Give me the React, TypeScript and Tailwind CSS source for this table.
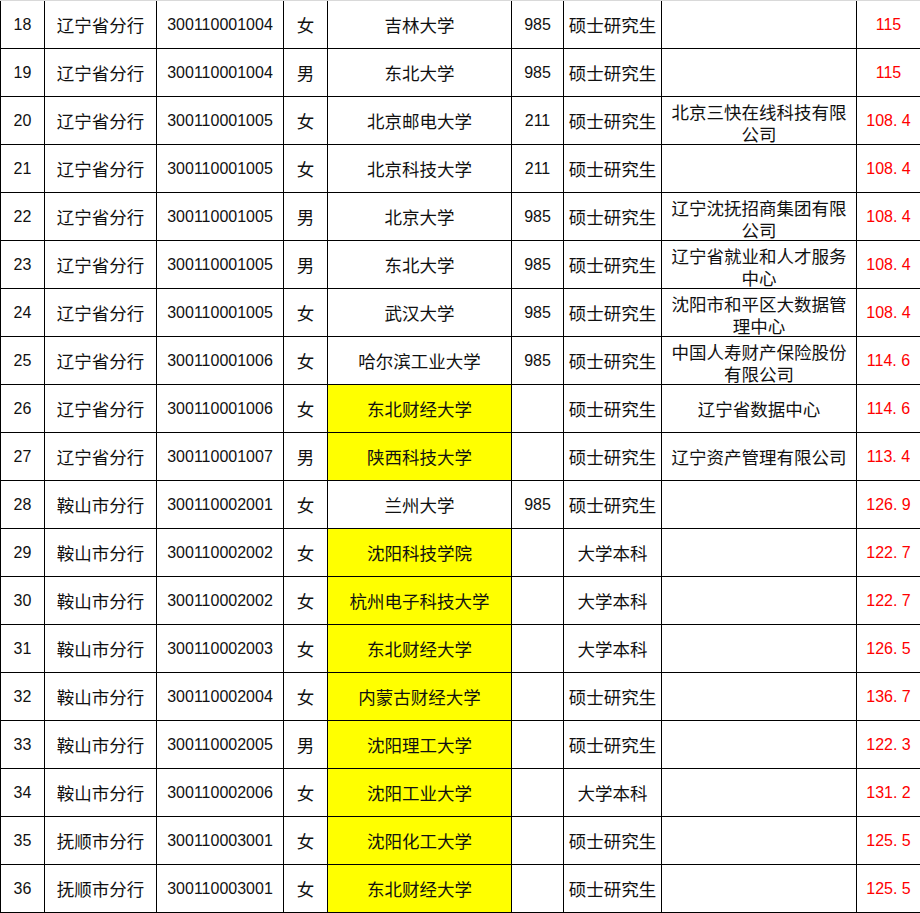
import React from "react";

type Row = {
  n: string;
  branch: string;
  code: string;
  sex: string;
  uni: string;
  yellow?: boolean;
  tier: string;
  edu: string;
  org: string[];
  score: string;
};

const rows: Row[] = [
  { n: "18", branch: "辽宁省分行", code: "300110001004", sex: "女", uni: "吉林大学", tier: "985", edu: "硕士研究生", org: [], score: "115" },
  { n: "19", branch: "辽宁省分行", code: "300110001004", sex: "男", uni: "东北大学", tier: "985", edu: "硕士研究生", org: [], score: "115" },
  { n: "20", branch: "辽宁省分行", code: "300110001005", sex: "女", uni: "北京邮电大学", tier: "211", edu: "硕士研究生", org: ["北京三快在线科技有限", "公司"], score: "108.4" },
  { n: "21", branch: "辽宁省分行", code: "300110001005", sex: "女", uni: "北京科技大学", tier: "211", edu: "硕士研究生", org: [], score: "108.4" },
  { n: "22", branch: "辽宁省分行", code: "300110001005", sex: "男", uni: "北京大学", tier: "985", edu: "硕士研究生", org: ["辽宁沈抚招商集团有限", "公司"], score: "108.4" },
  { n: "23", branch: "辽宁省分行", code: "300110001005", sex: "男", uni: "东北大学", tier: "985", edu: "硕士研究生", org: ["辽宁省就业和人才服务", "中心"], score: "108.4" },
  { n: "24", branch: "辽宁省分行", code: "300110001005", sex: "女", uni: "武汉大学", tier: "985", edu: "硕士研究生", org: ["沈阳市和平区大数据管", "理中心"], score: "108.4" },
  { n: "25", branch: "辽宁省分行", code: "300110001006", sex: "女", uni: "哈尔滨工业大学", tier: "985", edu: "硕士研究生", org: ["中国人寿财产保险股份", "有限公司"], score: "114.6" },
  { n: "26", branch: "辽宁省分行", code: "300110001006", sex: "女", uni: "东北财经大学", yellow: true, tier: "", edu: "硕士研究生", org: ["辽宁省数据中心"], score: "114.6" },
  { n: "27", branch: "辽宁省分行", code: "300110001007", sex: "男", uni: "陕西科技大学", yellow: true, tier: "", edu: "硕士研究生", org: ["辽宁资产管理有限公司"], score: "113.4" },
  { n: "28", branch: "鞍山市分行", code: "300110002001", sex: "女", uni: "兰州大学", tier: "985", edu: "硕士研究生", org: [], score: "126.9" },
  { n: "29", branch: "鞍山市分行", code: "300110002002", sex: "女", uni: "沈阳科技学院", yellow: true, tier: "", edu: "大学本科", org: [], score: "122.7" },
  { n: "30", branch: "鞍山市分行", code: "300110002002", sex: "女", uni: "杭州电子科技大学", yellow: true, tier: "", edu: "大学本科", org: [], score: "122.7" },
  { n: "31", branch: "鞍山市分行", code: "300110002003", sex: "女", uni: "东北财经大学", yellow: true, tier: "", edu: "大学本科", org: [], score: "126.5" },
  { n: "32", branch: "鞍山市分行", code: "300110002004", sex: "女", uni: "内蒙古财经大学", yellow: true, tier: "", edu: "硕士研究生", org: [], score: "136.7" },
  { n: "33", branch: "鞍山市分行", code: "300110002005", sex: "男", uni: "沈阳理工大学", yellow: true, tier: "", edu: "硕士研究生", org: [], score: "122.3" },
  { n: "34", branch: "鞍山市分行", code: "300110002006", sex: "女", uni: "沈阳工业大学", yellow: true, tier: "", edu: "大学本科", org: [], score: "131.2" },
  { n: "35", branch: "抚顺市分行", code: "300110003001", sex: "女", uni: "沈阳化工大学", yellow: true, tier: "", edu: "硕士研究生", org: [], score: "125.5" },
  { n: "36", branch: "抚顺市分行", code: "300110003001", sex: "女", uni: "东北财经大学", yellow: true, tier: "", edu: "硕士研究生", org: [], score: "125.5" },
];

const cjk = "font-['Noto_Sans_CJK_SC','Noto_Sans',sans-serif] text-[17.5px] leading-[22px]";
const num = "font-['Liberation_Sans',Arial,sans-serif] text-[16px]";
const cell = "flex items-center justify-center border-r border-b border-black text-[#111] text-center";

function Score({ v }: { v: string }) {
  const parts = v.split(".");
  return (
    <span className={`${num} text-[#ff0000] whitespace-nowrap`}>
      {parts[0]}
      {parts.length > 1 && (
        <>
          <span className="inline-block w-[8.9px] text-left">.</span>
          {parts[1]}
        </>
      )}
    </span>
  );
}

export default function App() {
  return (
    <div className="w-[920px] h-[913px] bg-white overflow-hidden">
      <div className="h-[1px] bg-[#d9d9d9]" />
      <div className="grid grid-cols-[44px_112px_127px_44px_184px_52px_98px_195px_64px] auto-rows-[48px] border-l border-black">
        {rows.map((r) => (
          <React.Fragment key={r.n}>
            <div className={`${cell} ${num}`}>{r.n}</div>
            <div className={`${cell} ${cjk}`}>{r.branch}</div>
            <div className={`${cell} ${num}`}>{r.code}</div>
            <div className={`${cell} ${cjk}`}>{r.sex}</div>
            <div className={`${cell} ${cjk} ${r.yellow ? "bg-[#ffff00]" : ""}`}>{r.uni}</div>
            <div className={`${cell} ${num}`}>{r.tier}</div>
            <div className={`${cell} ${cjk}`}>{r.edu}</div>
            <div className={`${cell} ${cjk} flex-col ${r.org.length > 1 ? "pt-[4px]" : ""}`}>
              {r.org.map((l, j) => (
                <span key={j} className="block whitespace-nowrap">{l}</span>
              ))}
            </div>
            <div className={`${cell}`}>
              <Score v={r.score} />
            </div>
          </React.Fragment>
        ))}
      </div>
    </div>
  );
}
